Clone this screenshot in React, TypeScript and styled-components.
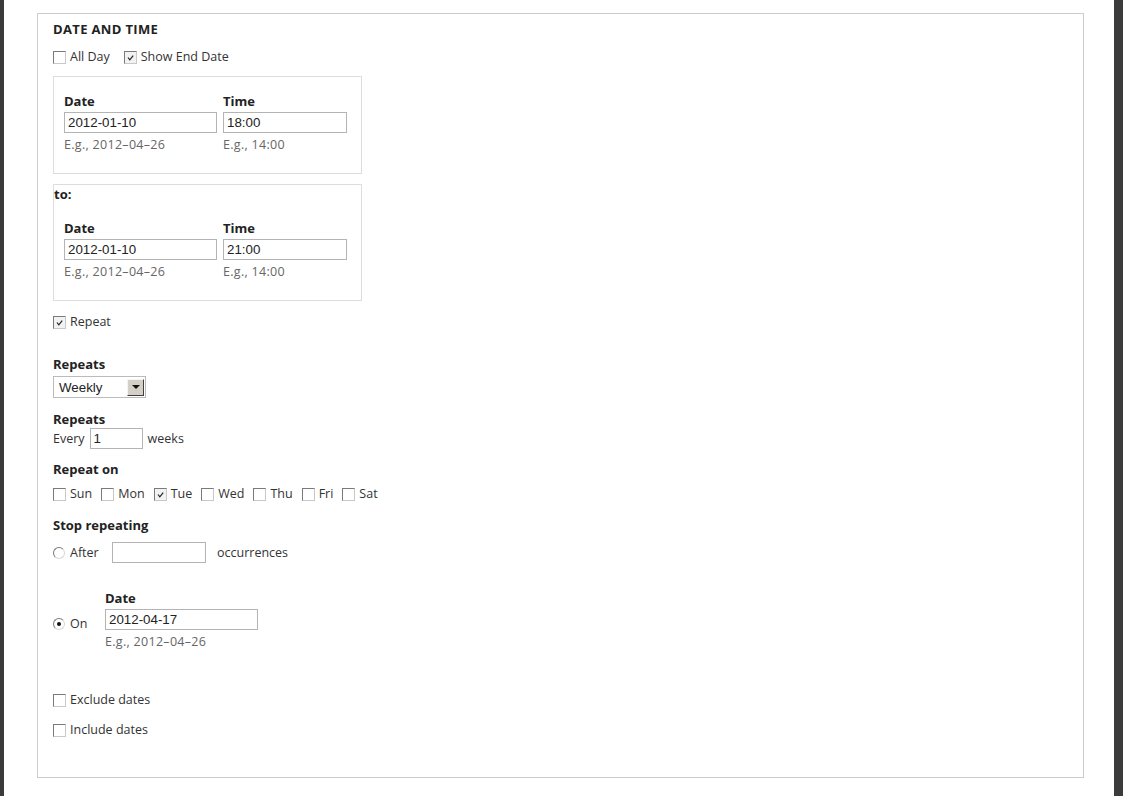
import styled, { createGlobalStyle } from "styled-components";

const GlobalStyle = createGlobalStyle`
  html, body {
    margin: 0;
    padding: 0;
    background: #fff;
  }
  body {
    font-family: "Open Sans", "DejaVu Sans", sans-serif;
    font-size: 12.5px;
    color: #333;
  }
`;

const Page = styled.div`
  width: 1123px;
  height: 796px;
  box-sizing: border-box;
  border-left: 4px solid #3b3b3b;
  border-right: 9px solid #3b3b3b;
  padding: 13px 30px 0 33px;
  background: #fff;
`;

const Fieldset = styled.section`
  box-sizing: border-box;
  height: 765px;
  border: 1px solid #ccc;
  padding: 7px 15px 0;
  display: flex;
  flex-direction: column;
  align-items: flex-start;
`;

const Title = styled.h2`
  margin: 0;
  font-size: 13px;
  line-height: 16px;
  font-weight: bold;
  letter-spacing: 0.35px;
  text-transform: uppercase;
  color: #222;
`;

const Row = styled.div<{ top: number; gap?: number }>`
  display: flex;
  align-items: center;
  gap: ${({ gap }) => gap ?? 4}px;
  margin-top: ${({ top }) => top}px;
  min-height: 16px;
  line-height: 16px;
`;

const Label = styled.div<{ top?: number }>`
  font-size: 13px;
  font-weight: bold;
  color: #222;
  line-height: 16px;
  margin-top: ${({ top }) => top ?? 0}px;
`;

const Box = styled.div<{ top: number }>`
  box-sizing: border-box;
  width: 309px;
  margin-top: ${({ top }) => top}px;
  border: 1px solid #ddd;
  padding: 16px 10px 20px;
`;

const Legend = styled.div`
  font-size: 13px;
  font-weight: bold;
  color: #222;
  line-height: 16px;
  margin: -15px 0 18px -10px;
`;

const Columns = styled.div`
  display: flex;
  gap: 6px;
`;

const Column = styled.div`
  display: flex;
  flex-direction: column;
`;

const TextInput = styled.div<{ w: number }>`
  box-sizing: border-box;
  width: ${({ w }) => w}px;
  height: 21px;
  margin-top: 3px;
  border: 1px solid #b4b4b4;
  padding: 0 3px;
  font-family: "Liberation Sans", Arial, sans-serif;
  font-size: 13.33px;
  line-height: 19px;
  color: #222;
  background: #fff;
`;

const InlineInput = styled(TextInput)`
  margin-top: 0;
`;

const Hint = styled.div`
  margin-top: 4px;
  line-height: 16px;
  letter-spacing: 0.3px;
  color: #666;
`;

const CheckBox = styled.span<{ checked?: boolean }>`
  box-sizing: border-box;
  width: 13px;
  height: 13px;
  flex: none;
  display: inline-flex;
  align-items: center;
  justify-content: center;
  border: 1px solid;
  border-color: #7a7a7a #c8c8c8 #c8c8c8 #7a7a7a;
  background: ${({ checked }) => (checked ? "#f2f2f2" : "#fff")};
`;

const Radio = styled.span<{ checked?: boolean }>`
  box-sizing: border-box;
  width: 12px;
  height: 12px;
  flex: none;
  border-radius: 50%;
  border: 1px solid;
  border-color: #7a7a7a #d8d8d8 #d8d8d8 #7a7a7a;
  display: inline-flex;
  align-items: center;
  justify-content: center;
  background: #fff;
  &::after {
    content: "";
    width: 4px;
    height: 4px;
    border-radius: 50%;
    background: ${({ checked }) => (checked ? "#111" : "transparent")};
  }
`;

const Days = styled.div`
  display: flex;
  align-items: center;
  gap: 9px;
  margin-top: 9px;
  line-height: 16px;
`;

const Day = styled.label`
  display: flex;
  align-items: center;
  gap: 4px;
`;

const Select = styled.div`
  box-sizing: border-box;
  width: 93px;
  height: 22px;
  margin-top: 4px;
  border: 1px solid #bbb;
  display: flex;
  align-items: center;
  justify-content: space-between;
  padding: 0 1px 0 5px;
  font-family: "Liberation Sans", Arial, sans-serif;
  font-size: 13.33px;
  color: #222;
`;

const SelectButton = styled.span`
  box-sizing: border-box;
  width: 17px;
  height: 17px;
  background: #d4d0c8;
  border: 1px solid;
  border-color: #f4f4f4 #404040 #404040 #f4f4f4;
  display: flex;
  align-items: center;
  justify-content: center;
  &::after {
    content: "";
    border-left: 4px solid transparent;
    border-right: 4px solid transparent;
    border-top: 4px solid #111;
  }
`;

const OnGrid = styled.div`
  display: grid;
  grid-template-columns: 52px auto;
  margin-top: 27px;
  align-items: center;
`;

const OnChoice = styled.div`
  grid-column: 1;
  grid-row: 2;
  display: flex;
  align-items: center;
  gap: 5px;
  margin-top: 7px;
`;

const OnDate = styled.div`
  grid-column: 2;
  grid-row: 1 / span 3;
  display: flex;
  flex-direction: column;
`;

function Check({ checked }: { checked?: boolean }) {
  return (
    <CheckBox checked={checked}>
      {checked && (
        <svg width="9" height="9" viewBox="0 0 9 9">
          <path d="M2 4.5 L3.8 6.8 L7.2 2.6" fill="none" stroke="#222" strokeWidth="1.2" />
        </svg>
      )}
    </CheckBox>
  );
}

function DateTimeFields({ date, time }: { date: string; time: string }) {
  return (
    <Columns>
      <Column>
        <Label>Date</Label>
        <TextInput w={153}>{date}</TextInput>
        <Hint>E.g., 2012–04–26</Hint>
      </Column>
      <Column>
        <Label>Time</Label>
        <TextInput w={124}>{time}</TextInput>
        <Hint>E.g., 14:00</Hint>
      </Column>
    </Columns>
  );
}

const days = [
  { name: "Sun", on: false },
  { name: "Mon", on: false },
  { name: "Tue", on: true },
  { name: "Wed", on: false },
  { name: "Thu", on: false },
  { name: "Fri", on: false },
  { name: "Sat", on: false },
];

export default function App() {
  return (
    <Page>
      <GlobalStyle />
      <Fieldset>
        <Title>Date and time</Title>
        <Row top={12}>
          <Check />
          <span style={{ marginRight: 10 }}>All Day</span>
          <Check checked />
          <span>Show End Date</span>
        </Row>

        <Box top={11}>
          <DateTimeFields date="2012-01-10" time="18:00" />
        </Box>
        <Box top={10}>
          <Legend>to:</Legend>
          <DateTimeFields date="2012-01-10" time="21:00" />
        </Box>

        <Row top={13}>
          <Check checked />
          <span>Repeat</span>
        </Row>

        <Label top={26}>Repeats</Label>
        <Select>
          <span>Weekly</span>
          <SelectButton />
        </Select>

        <Label top={13}>Repeats</Label>
        <Row top={1} gap={5}>
          <span>Every</span>
          <InlineInput w={53}>1</InlineInput>
          <span>weeks</span>
        </Row>

        <Label top={12}>Repeat on</Label>
        <Days>
          {days.map((d) => (
            <Day key={d.name}>
              <Check checked={d.on} />
              <span>{d.name}</span>
            </Day>
          ))}
        </Days>

        <Label top={15}>Stop repeating</Label>
        <Row top={9} gap={0}>
          <Radio />
          <span style={{ marginLeft: 5, width: 42 }}>After</span>
          <InlineInput w={94}>&nbsp;</InlineInput>
          <span style={{ marginLeft: 11 }}>occurrences</span>
        </Row>

        <OnGrid>
          <OnChoice>
            <Radio checked />
            <span>On</span>
          </OnChoice>
          <OnDate>
            <Label>Date</Label>
            <TextInput w={153}>2012-04-17</TextInput>
            <Hint>E.g., 2012–04–26</Hint>
          </OnDate>
        </OnGrid>

        <Row top={42}>
          <Check />
          <span>Exclude dates</span>
        </Row>
        <Row top={14}>
          <Check />
          <span>Include dates</span>
        </Row>
      </Fieldset>
    </Page>
  );
}
